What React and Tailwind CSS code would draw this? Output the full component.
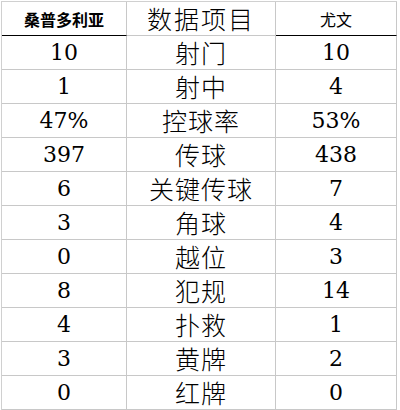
import React from "react";

const rows = [
  ["10", "射门", "10"],
  ["1", "射中", "4"],
  ["47%", "控球率", "53%"],
  ["397", "传球", "438"],
  ["6", "关键传球", "7"],
  ["3", "角球", "4"],
  ["0", "越位", "3"],
  ["8", "犯规", "14"],
  ["4", "扑救", "1"],
  ["3", "黄牌", "2"],
  ["0", "红牌", "0"],
];

export default function App() {
  return (
    <div className="w-[400px] h-[410px] bg-white text-black overflow-hidden">
      <div className="mt-[1px] ml-[1px] w-[396px] border-t border-l border-[#d0d0d0]">
        <div className="flex h-[34px]">
          <div className="w-[125px] flex items-center justify-center border-r border-b border-r-[#c8c8c8] border-b-black">
            <span className="text-[16px] font-bold font-['Noto_Sans_CJK_SC']">桑普多利亚</span>
          </div>
          <div className="w-[149px] flex items-center justify-center border-r border-b border-[#c8c8c8]">
            <span className="text-[25px] font-light tracking-[2px] font-['Noto_Sans_CJK_SC']">数据项目</span>
          </div>
          <div className="w-[121px] flex items-center justify-center border-r border-b border-r-[#c8c8c8] border-b-black">
            <span className="text-[16px] font-['Noto_Sans_CJK_SC']">尤文</span>
          </div>
        </div>
        {rows.map((r, i) => (
          <div key={i} className="flex h-[34px]">
            <div className="w-[125px] flex items-center justify-center border-r border-b border-[#c8c8c8]">
              <span className="text-[22px] font-['DejaVu_Serif']">{r[0]}</span>
            </div>
            <div className="w-[149px] flex items-center justify-center border-r border-b border-[#c8c8c8]">
              <span className="text-[25px] font-light tracking-[1px] font-['Noto_Sans_CJK_SC']">{r[1]}</span>
            </div>
            <div className="w-[121px] flex items-center justify-center border-r border-b border-[#c8c8c8]">
              <span className="text-[22px] font-['DejaVu_Serif']">{r[2]}</span>
            </div>
          </div>
        ))}
      </div>
    </div>
  );
}
